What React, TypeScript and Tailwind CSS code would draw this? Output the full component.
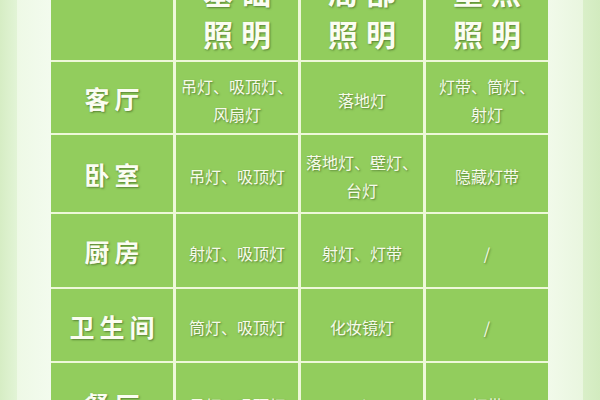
import React from 'react';

const font = { fontFamily: '"Noto Sans CJK SC", "Noto Sans", sans-serif' };

type Row = { name: string; cells: string[][]; h: string };

const rows: Row[] = [
  { name: '客厅', cells: [['吊灯、吸顶灯、', '风扇灯'], ['落地灯'], ['灯带、筒灯、', '射灯']], h: 'h-[71px]' },
  { name: '卧室', cells: [['吊灯、吸顶灯'], ['落地灯、壁灯、', '台灯'], ['隐藏灯带']], h: 'h-[77px]' },
  { name: '厨房', cells: [['射灯、吸顶灯'], ['射灯、灯带'], ['/']], h: 'h-[73px]' },
  { name: '卫生间', cells: [['筒灯、吸顶灯'], ['化妆镜灯'], ['/']], h: 'h-[72px]' },
  { name: '餐厅', cells: [['吊灯、吸顶灯'], ['/'], ['灯带']], h: 'h-[80px]' },
];

const heads = [
  ['基础', '照明'],
  ['局部', '照明'],
  ['重点', '照明'],
];

const shadow = '[text-shadow:1px_1px_2px_rgba(40,70,20,0.55)]';

export default function App() {
  return (
    <div className="flex h-[400px] w-[600px] overflow-hidden bg-[#eaf7e0]" style={font}>
      {/* left margin */}
      <div className="w-[17px] shrink-0 bg-gradient-to-r from-[#d6edc4] to-[#e2f4d6]" />
      <div className="w-[34px] shrink-0 bg-gradient-to-r from-[#eef9e6] to-[#f3fbee]" />

      {/* table */}
      <div className="w-[497px] shrink-0">
        <div className="-mt-[39px] grid grid-cols-[122px_122px_122px_122px] gap-x-[3px] gap-y-[2px] bg-[#eef8d9]">
          <div className="h-[99px] bg-[#92cd5d]" />
          {heads.map((h) => (
            <div
              key={h[1] + h[0]}
              className={`flex h-[99px] flex-col items-center justify-end bg-[#92cd5d] pb-[6px] text-[30px] font-bold leading-[42px] tracking-[8px] text-[#fbfdf2] ${shadow}`}
            >
              {h.map((t) => (
                <span key={t} className="pl-[8px]">{t}</span>
              ))}
            </div>
          ))}

          {rows.map((r) => (
            <React.Fragment key={r.name}>
              <div
                className={`flex ${r.h} items-center justify-center bg-[#92cd5d] pl-[5px] pt-[3px] text-[25px] font-bold tracking-[5px] text-[#fbfdf2] ${shadow}`}
              >
                {r.name}
              </div>
              {r.cells.map((c, i) => (
                <div
                  key={i}
                  className={`flex ${r.h} flex-col items-center justify-center bg-[#92cd5d] pt-[4px] text-[16px] leading-[28px] text-[#f7fbea] ${shadow}`}
                >
                  {c.map((t) => (
                    <span key={t} className="whitespace-nowrap">{t}</span>
                  ))}
                </div>
              ))}
            </React.Fragment>
          ))}
        </div>
      </div>

      {/* right margin */}
      <div className="w-[35px] shrink-0 bg-gradient-to-r from-[#f1faea] to-[#e9f6df]" />
      <div className="flex-1 bg-gradient-to-r from-[#d9efc8] to-[#d2ebbf]" />
    </div>
  );
}
